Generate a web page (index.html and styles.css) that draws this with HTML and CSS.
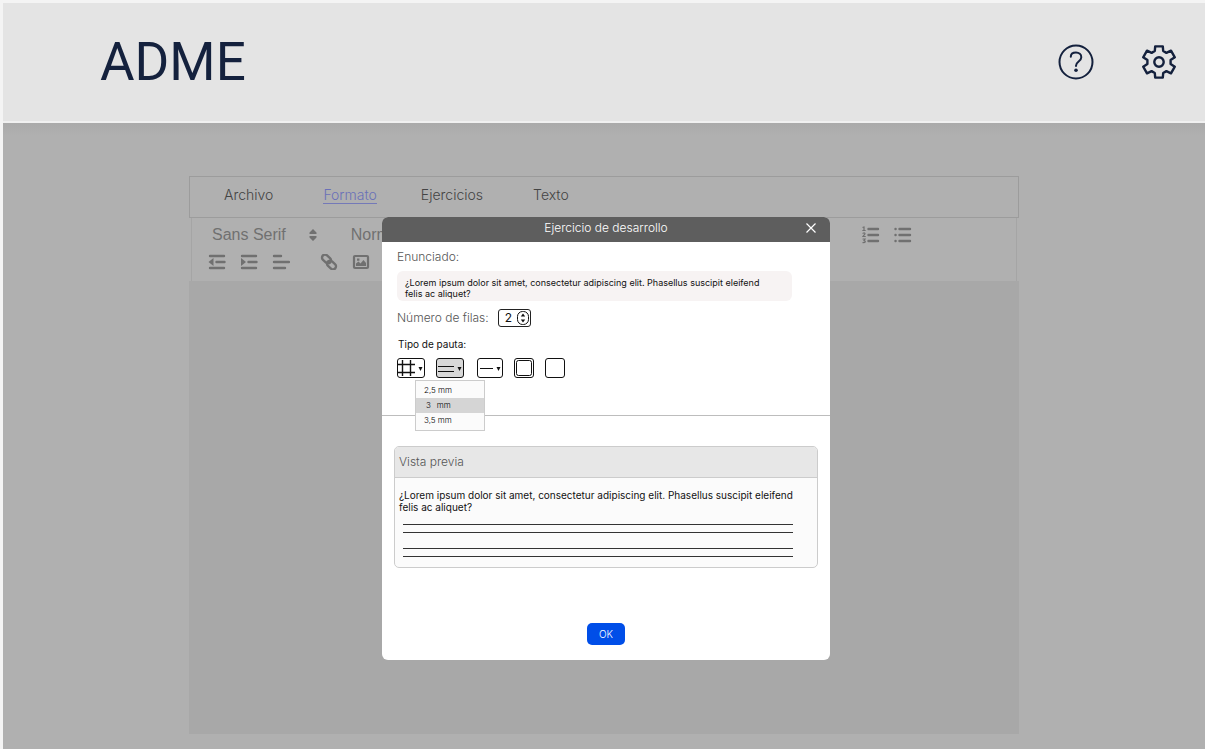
FILE: index.html
```html
<!DOCTYPE html>
<html lang="es">
<head>
<meta charset="utf-8">
<meta name="viewport" content="width=device-width, initial-scale=1">
<title>ADME</title>
<link rel="stylesheet" href="styles.css">
</head>
<body>
<div class="page">
  <header class="header">
    <h1 class="logo">ADME</h1>
    <div class="header-actions">
      <button class="icon-button" type="button" aria-label="Ayuda">
        <svg viewBox="0 0 36 36" width="36" height="36" fill="none" stroke="currentColor" stroke-width="2" stroke-linecap="round">
          <circle cx="18" cy="18" r="16.5"/>
          <path d="M12.8 12.8C12.8 10 15 8.600 18 8.600s5.300 1.800 5.300 4.700c0 4.200-5.300 4.300-5.300 8.400v.4"/>
          <circle cx="18" cy="26.2" r="1.800" fill="currentColor" stroke="none"/>
        </svg>
      </button>
      <button class="icon-button" type="button" aria-label="Configuración">
        <svg viewBox="-18 -18 36 36" width="36" height="36" fill="none" stroke="currentColor" stroke-width="2.4" stroke-linejoin="round">
          <path d="M-4.2-11-3.8-15.6H3.8L4.2-11 7.4-9.1 12-11.3 15.8-4.7 11.6-1.9V1.9L15.8 4.7 12 11.3 7.4 9.1 4.2 11 3.8 15.6H-3.8L-4.2 11-7.4 9.1-12 11.3-15.8 4.7-11.6 1.9V-1.9L-15.8-4.7-12-11.3-7.4-9.1Z"/>
          <circle r="4.7"/>
        </svg>
      </button>
    </div>
  </header>

  <main class="workspace">
    <section class="editor">
      <nav class="menu">
        <a class="menu-link" href="#archivo">Archivo</a>
        <a class="menu-link active" href="#formato">Formato</a>
        <a class="menu-link" href="#ejercicios">Ejercicios</a>
        <a class="menu-link" href="#texto">Texto</a>
      </nav>
      <div class="toolbar">
        <div class="toolbar-row">
          <button class="picker" type="button">Sans Serif
            <svg viewBox="0 0 8 12" width="8" height="12" fill="currentColor"><path d="M4 0 7.5 3.5V5h-7V3.5ZM4 12 .5 8.5V7h7v1.5Z"/></svg>
          </button>
          <button class="picker" type="button">Normal</button>
          <div class="lists">
            <button class="tool" type="button" aria-label="Lista numerada">
              <svg viewBox="0 0 18 18" width="18" height="18" fill="none" stroke="currentColor" stroke-width="2.4" stroke-linecap="round">
                <path d="M6.500 3h9.500M6.500 9h9.500M6.500 15h9.500"/>
                <path stroke-width="1.200" d="M1 1.300 2 1v3.500M.8 4.500h2.400M1 7.200q2-.8 2 .6L1 10.500h2.300M1 13h2l-1 1.600q2 .4.8 1.800L1 16.700"/>
              </svg>
            </button>
            <button class="tool" type="button" aria-label="Lista con viñetas">
              <svg viewBox="0 0 18 18" width="18" height="18" fill="none" stroke="currentColor" stroke-width="2.4" stroke-linecap="round">
                <path d="M5.500 3h10.500M5.500 9h10.500M5.500 15h10.500M1.500 3h.1M1.500 9h.1M1.500 15h.1"/>
              </svg>
            </button>
          </div>
        </div>
        <div class="toolbar-row tools">
          <button class="tool" type="button" aria-label="Reducir sangría">
            <svg viewBox="0 0 18 16" width="18" height="16" fill="currentColor" stroke="currentColor" stroke-width="2.4" stroke-linecap="round"><path d="M2 2h14M8.500 8h8M2 14h14"/><path stroke="none" d="M5.500 4v8L.5 8Z"/></svg>
          </button>
          <button class="tool" type="button" aria-label="Aumentar sangría">
            <svg viewBox="0 0 18 16" width="18" height="16" fill="currentColor" stroke="currentColor" stroke-width="2.4" stroke-linecap="round"><path d="M2 2h14M8.500 8h8M2 14h14"/><path stroke="none" d="M1 4v8l5-4Z"/></svg>
          </button>
          <button class="tool" type="button" aria-label="Alinear">
            <svg viewBox="0 0 18 16" width="18" height="16" fill="none" stroke="currentColor" stroke-width="2.4" stroke-linecap="round"><path d="M2 2h7M2 8h15M2 14h11"/></svg>
          </button>
          <button class="tool tool-link" type="button" aria-label="Enlace">
            <svg viewBox="0 0 18 16" width="18" height="16" fill="none" stroke="currentColor" stroke-width="2.4"><rect x="1.500" y="2" width="10" height="6" rx="3" transform="rotate(42 6.500 5)"/><rect x="6.500" y="8" width="10" height="6" rx="3" transform="rotate(42 11.500 11)"/></svg>
          </button>
          <button class="tool" type="button" aria-label="Imagen">
            <svg viewBox="0 0 18 16" width="18" height="16" fill="none" stroke="currentColor" stroke-width="2.2"><rect x="2" y="2" width="14" height="12" rx="1"/><path fill="currentColor" stroke="none" d="M4 12V9.500L6.500 7.500 8.500 9.500 11.500 6 14 9V12ZM5 4.500h2.400v2.200H5Z"/></svg>
          </button>
        </div>
      </div>
      <div class="canvas"></div>
    </section>

    <div class="overlay">
      <form class="dialog" role="dialog" aria-labelledby="dialog-title">
        <header class="dialog-head">
          <h2 class="dialog-title" id="dialog-title">Ejercicio de desarrollo</h2>
          <button class="close" type="button" aria-label="Cerrar">
            <svg viewBox="0 0 10 10" width="10" height="10" fill="none" stroke="currentColor" stroke-width="1.2"><path d="m.5.5 9 9m0-9-9 9"/></svg>
          </button>
        </header>
        <div class="settings">
          <label class="label" for="enunciado">Enunciado:</label>
          <textarea class="statement" id="enunciado" rows="2">¿Lorem ipsum dolor sit amet, consectetur adipiscing elit. Phasellus suscipit eleifend felis ac aliquet?</textarea>
          <div class="rows-field">
            <label class="label" for="filas">Número de filas:</label>
            <span class="stepper">
              <input class="stepper-input" id="filas" type="text" inputmode="numeric" value="2">
              <svg viewBox="0 0 12 14" width="12" height="14" fill="none" stroke="currentColor"><rect x=".5" y=".5" width="11" height="13" rx="5"/><path fill="currentColor" stroke="none" d="M6 2.500 8.200 5.500H3.800ZM6 11.500 3.800 8.500h4.400Z"/></svg>
            </span>
          </div>
          <p class="caption">Tipo de pauta:</p>
          <div class="patterns">
            <button class="pattern wide" type="button" aria-label="Cuadrícula">
              <svg viewBox="0 0 26 18" width="26" height="18" fill="none" stroke="currentColor" stroke-width="1.400"><path d="M0 5.500h17M0 13.500h17M4.500 1v16M12.500 1v16"/><path fill="currentColor" stroke="none" d="M20.500 8h4l-2 4Z"/></svg>
            </button>
            <div class="pattern-group">
              <button class="pattern wide selected" type="button" aria-label="Doble línea" aria-expanded="true">
                <svg viewBox="0 0 26 18" width="26" height="18" fill="none" stroke="currentColor"><path d="M1 7.500h16M1 12.500h16"/><path fill="currentColor" stroke="none" d="M20.500 8h4l-2 4Z"/></svg>
              </button>
              <div class="sizes">
                <button class="size" type="button">2,5 mm</button>
                <button class="size chosen" type="button"><span>3</span><span>mm</span></button>
                <button class="size" type="button">3,5 mm</button>
              </div>
            </div>
            <button class="pattern medium" type="button" aria-label="Línea simple">
              <svg viewBox="0 0 24 18" width="24" height="18" fill="none" stroke="currentColor"><path d="M2 9.500h13"/><path fill="currentColor" stroke="none" d="M18.500 8h4l-2 4Z"/></svg>
            </button>
            <button class="pattern" type="button" aria-label="Marco doble">
              <svg viewBox="0 0 18 18" width="18" height="18" fill="none" stroke="currentColor"><rect x="1.500" y="1.500" width="15" height="15" rx="2"/></svg>
            </button>
            <button class="pattern" type="button" aria-label="Marco vacío"></button>
          </div>
        </div>
        <section class="preview-area">
          <div class="preview">
            <h3 class="preview-title">Vista previa</h3>
            <div class="preview-body">
              <p class="preview-text">¿Lorem ipsum dolor sit amet, consectetur adipiscing elit. Phasellus suscipit eleifend felis ac aliquet?</p>
              <div class="ruled">
                <div class="ruled-row"></div>
                <div class="ruled-row"></div>
              </div>
            </div>
          </div>
          <button class="ok" type="button">OK</button>
        </section>
      </form>
    </div>
  </main>
</div>
</body>
</html>
```

FILE: styles.css
```css
* { box-sizing: border-box; }

body {
  margin: 0;
  background: #f4f4f4;
  font-family: Inter, "Liberation Sans", sans-serif;
  color: #111;
}

button, input, textarea { font: inherit; color: inherit; }

button {
  padding: 0;
  border: 0;
  background: none;
  cursor: pointer;
}

svg { display: block; }

h1, h2, h3, p { margin: 0; font-weight: 400; }

.page {
  display: flex;
  flex-direction: column;
  min-height: 100vh;
  padding: 3px 0 0 3px;
}

.header {
  display: flex;
  align-items: center;
  justify-content: space-between;
  padding: 29px 28px 29px 97px;
  border-bottom: 2px solid #f0f0f0;
  background: #e4e4e4;
  color: #14213d;
}

.logo {
  font: 500 53px/60px Roboto, sans-serif;
  font-weight: 450;
}

.header-actions { display: flex; gap: 47px; }

.workspace {
  position: relative;
  display: flex;
  flex: 1;
  justify-content: center;
  padding: 53px 186px 15px;
  background: linear-gradient(#aaa, #b0b0b0 12px);
}

.editor {
  display: flex;
  flex: 1;
  flex-direction: column;
}

.menu {
  display: flex;
  align-items: center;
  height: 42px;
  padding: 0 34px 4px;
  border: 1px solid #9c9c9c;
  font-size: 14px;
  font-weight: 300;
  line-height: 16px;
}

.menu-link {
  margin-right: 50px;
  color: #444;
  text-decoration: none;
}

.menu-link.active {
  margin-right: 44px;
  border-bottom: 1px solid #7479b8;
  color: #6a70b8;
}

.toolbar {
  display: flex;
  flex-direction: column;
  gap: 9px;
  margin: 0 2px;
  padding: 7px 16px 11px;
  border: solid #a5a5a5;
  border-width: 0 1px;
  color: #707070;
}

.toolbar-row { display: flex; align-items: center; }

.picker {
  display: flex;
  align-items: center;
  gap: 23px;
  margin: 0 34px 0 4px;
  font: 16px/20px "Liberation Sans", sans-serif;
}

.picker + .picker { margin: 0; }

.lists {
  display: flex;
  gap: 14px;
  margin: 0 88px 0 auto;
}

.tools { gap: 14px; }

.tool-link { margin-left: 16px; }

.canvas { flex: 1; background: #a8a8a8; }

.overlay {
  position: absolute;
  inset: 0;
  padding: 94px 0 0 4px;
}

.dialog {
  width: 448px;
  max-width: 100%;
  margin: 0 auto;
  overflow: hidden;
  border-radius: 6px;
  background: #fff;
}

.dialog-head {
  display: grid;
  grid-template-columns: 1fr auto 1fr;
  align-items: center;
  padding: 3px 14px 6px;
  background: #5e5e5e;
  color: #fff;
}

.dialog-title {
  grid-column: 2;
  font-size: 12px;
  font-weight: 300;
  line-height: 16px;
}

.close { justify-self: end; }

.settings {
  padding: 7px 38px 34px 15px;
  border-bottom: 1px solid #bdbdbd;
}

.label {
  display: block;
  color: #555;
  font-size: 12px;
  font-weight: 300;
  line-height: 16px;
}

.statement {
  display: block;
  width: 100%;
  height: 30px;
  margin: 6px 0 8px;
  padding: 6px 22px 0 8px;
  overflow: hidden;
  border: 0;
  border-radius: 6px;
  background: #f7f3f3;
  font-size: 9px;
  line-height: 11px;
  resize: none;
}

.rows-field { display: flex; align-items: center; gap: 9px; }

.stepper {
  display: flex;
  align-items: center;
  width: 33px;
  height: 18px;
  padding: 0 1px 0 6px;
  border: 1px solid #222;
  border-radius: 3px;
}

.stepper-input {
  flex: 1;
  min-width: 0;
  padding: 0;
  border: 0;
  background: none;
  font-size: 12px;
  line-height: 16px;
}

.caption {
  margin: 10px 0 7px 1px;
  font-size: 10px;
  line-height: 14px;
}

.patterns { display: flex; gap: 11px; }

.pattern {
  width: 20px;
  height: 20px;
  border: 1px solid #111;
  border-radius: 3px;
}

.pattern.wide { width: 28px; }

.pattern.medium { width: 26px; margin-left: 2px; }

.pattern.selected { background: #d8d8d8; }

.pattern-group { position: relative; }

.sizes {
  position: absolute;
  top: 22px;
  left: -21px;
  width: 70px;
  padding: 2px 0;
  border: 1px solid #ccc;
  background: #fbfbfb;
}

.size {
  display: flex;
  gap: 6px;
  width: 100%;
  padding: 0 8px;
  color: #000;
  font-size: 8px;
  font-weight: 300;
  line-height: 15px;
}

.size.chosen { padding-left: 10px; background: #d5d5d5; }

.preview-area {
  display: flex;
  flex-direction: column;
  align-items: center;
  padding: 30px 12px 15px;
}

.preview {
  width: 100%;
  overflow: hidden;
  border: 1px solid #ccc;
  border-radius: 5px;
  background: #fbfbfb;
}

.preview-title {
  padding: 7px 4px;
  border-bottom: 1px solid #ccc;
  background: #e7e7e7;
  color: #555;
  font-size: 12px;
  font-weight: 300;
  line-height: 16px;
}

.preview-body { padding: 11px 24px 10px 4px; }

.preview-text { font-size: 10px; line-height: 12px; }

.ruled {
  display: grid;
  gap: 15px;
  margin: 11px 0 0 4px;
}

.ruled-row {
  height: 9px;
  border: solid #333;
  border-width: 1px 0;
}

.ok {
  width: 38px;
  height: 22px;
  margin-top: 55px;
  border-radius: 5px;
  background: #004ee8;
  color: #fff;
  font-size: 10px;
  font-weight: 300;
}
```
